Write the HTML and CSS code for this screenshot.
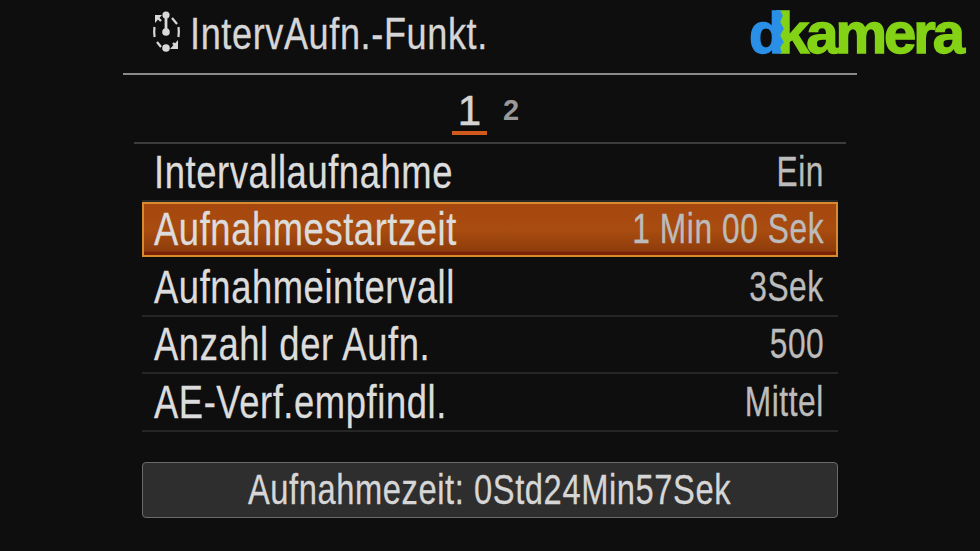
FILE: index.html
```html
<!DOCTYPE html>
<html lang="de">
<head>
<meta charset="utf-8">
<title>IntervAufn.-Funkt.</title>
<link rel="stylesheet" href="styles.css">
</head>
<body>
<main class="screen">
  <header class="head">
    <div class="title-wrap">
      <svg class="title-icon" viewBox="0 0 30 44" width="30" height="44" aria-hidden="true">
        <g fill="none" stroke="#d8d8d8" stroke-width="2.2">
          <path d="M2.5 18Q1.8 23 2.6 28M26.5 18Q27.2 23 26.4 28M5 33l4 5M20 9l5 6"/>
          <path d="M14 6V23" stroke-width="2.8"/>
          <path d="M5 8l4 4M25 38l-4-4" stroke-width="2.4"/>
        </g>
        <g fill="#d8d8d8">
          <circle cx="14" cy="6" r="3.6"/>
          <circle cx="14" cy="23" r="3.8"/>
          <circle cx="14" cy="39" r="3.8"/>
          <path d="M3 6h7l-7 8zM26 40h-8l8-9z"/>
        </g>
      </svg>
      <h1 class="title">IntervAufn.-Funkt.</h1>
    </div>
    <div class="logo">
      <span class="logo-d">d</span><span class="logo-k">kamera</span>
      <svg class="logo-zig" viewBox="0 0 9 44" width="9" height="43" aria-hidden="true"><path d="M0 0H4L7 6 4 12 8 19 4 26 8 33 4 38 6 44H0Z" fill="#2a8fe6"/></svg>
    </div>
  </header>
  <hr class="rule">
  <nav class="tabs">
    <span class="tab tab-on">1</span>
    <span class="tab">2</span>
  </nav>
  <ul class="list">
    <li class="row"><span class="key">Intervallaufnahme</span><span class="val">Ein</span></li>
    <li class="row row-on"><span class="key">Aufnahmestartzeit</span><span class="val">1 Min 00 Sek</span></li>
    <li class="row"><span class="key">Aufnahmeintervall</span><span class="val">3Sek</span></li>
    <li class="row"><span class="key">Anzahl der Aufn.</span><span class="val">500</span></li>
    <li class="row"><span class="key">AE-Verf.empfindl.</span><span class="val">Mittel</span></li>
  </ul>
  <div class="status"><span class="status-text">Aufnahmezeit: 0Std24Min57Sek</span></div>
</main>
</body>
</html>
```
FILE: styles.css
```css
* { box-sizing: border-box; }
html, body { margin: 0; padding: 0; background: #0e0e0f; }
.screen {
  width: 980px;
  height: 551px;
  overflow: hidden;
  background: #0e0e0f;
  font-family: "Liberation Sans", Arial, sans-serif;
  color: #d9d9d9;
}
.head {
  height: 73px;
  display: flex;
  justify-content: space-between;
  align-items: flex-start;
  padding: 9px 16px 0 152px;
}
.title-wrap { display: flex; align-items: flex-start; gap: 8px; }
.title-icon { flex: none; width: 30px; height: 44px; }
.title {
  margin: 0;
  font-size: 44px;
  line-height: 50px;
  font-weight: 400;
  letter-spacing: .75px;
  white-space: nowrap;
  transform: scaleX(.82);
  transform-origin: left center;
  color: #d6d6d6;
  -webkit-text-stroke: .3px #d6d6d6;
}
.logo {
  position: relative;
  display: flex;
  width: 215px;
  height: 65px;
  margin-top: -9px;
  font-family: "Liberation Sans", sans-serif;
  font-weight: 700;
  font-size: 58px;
  line-height: 65px;
  white-space: nowrap;
}
.logo-d {
  color: #2a8fe6;
  letter-spacing: -7.5px;
  -webkit-text-stroke: 1.4px #2a8fe6;
}
.logo-k {
  letter-spacing: -3px;
  color: #84d215;
  -webkit-text-stroke: 1.4px #84d215;
}
.logo-zig { position: absolute; left: 27px; top: 10px; }
.rule {
  margin: 0 123px;
  height: 2px;
  border: 0;
  background: #8a8a8a;
}
.tabs {
  margin: 0 134px;
  height: 69px;
  display: flex;
  justify-content: center;
  align-items: flex-start;
  gap: 16px;
  padding-top: 15px;
  padding-right: 9px;
  border-bottom: 2px solid #3c3c3c;
}
.tab {
  font-size: 29px;
  font-weight: 700;
  line-height: 40px;
  color: #9a9a9a;
}
.tab-on {
  font-size: 42px;
  width: 35px;
  height: 45px;
  text-align: center;
  line-height: 42px;
  color: #d4d4d4;
  font-weight: 400;
  -webkit-text-stroke: .6px #d4d4d4;
  border-bottom: 4px solid #cf5a1c;
}
.list {
  margin: 0 142px;
  padding: 0;
  list-style: none;
}
.row {
  height: 57.5px;
  display: flex;
  justify-content: space-between;
  align-items: center;
  padding: 0 14px 0 12px;
  border-bottom: 2px solid #262626;
}
.row-on {
  border: 2px solid #d98a2c;
  background: linear-gradient(#a5470f, #a94c10 50%, #8f3d0c 92%, #7a2003 95%);
  padding: 0 12px 0 10px;
  height: 55px;
  margin-bottom: 2.5px;
}
.key {
  font-size: 46px;
  line-height: 50px;
  letter-spacing: .75px;
  transform: scaleX(.79);
  transform-origin: left center;
  color: #dcdcdc;
  -webkit-text-stroke: .3px #dcdcdc;
}
.val {
  font-size: 42px;
  line-height: 46px;
  letter-spacing: .75px;
  transform: scaleX(.755);
  transform-origin: right center;
  color: #bcbcbc;
  -webkit-text-stroke: .3px #bcbcbc;
}
.status {
  margin: 30px 142px 0;
  height: 56px;
  border: 1px solid #6a6a6a;
  border-radius: 4px;
  background: #2e2e2e;
  text-align: center;
  font-size: 42px;
  line-height: 53px;
  color: #d6d6d6;
  white-space: nowrap;
}
.status-text {
  display: inline-block;
  letter-spacing: .75px;
  transform: scaleX(.778);
  -webkit-text-stroke: .3px #d6d6d6;
}
```
